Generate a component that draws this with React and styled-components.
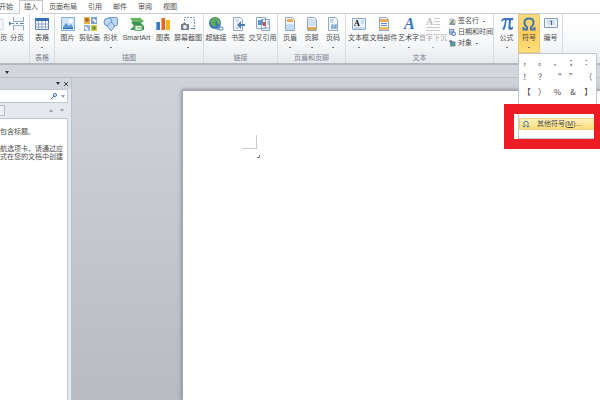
import React from 'react'
import styled, { createGlobalStyle, css } from 'styled-components'

const tabs = ['开始', '插入', '页面布局', '引用', '邮件', '审阅', '视图']

const groups = [
    {
        name: '',
        items: [
            { label: '页', icon: 'blank', w: 5 },
            { label: '分页', icon: 'break', w: 22 }
        ]
    },
    { name: '表格', items: [{ label: '表格', icon: 'table', w: 22, more: true }] },
    {
        name: '插图',
        items: [
            { label: '图片', icon: 'picture', w: 23 },
            { label: '剪贴画', icon: 'clip', w: 21 },
            { label: '形状', icon: 'shapes', w: 21, more: true },
            { label: 'SmartArt', icon: 'smart', w: 31 },
            { label: '图表', icon: 'chart', w: 22 },
            { label: '屏幕截图', icon: 'shot', w: 28, more: true }
        ]
    },
    {
        name: '链接',
        items: [
            { label: '超链接', icon: 'globe', w: 22 },
            { label: '书签', icon: 'bookmark', w: 22 },
            { label: '交叉引用', icon: 'cross', w: 27 }
        ]
    },
    {
        name: '页眉和页脚',
        items: [
            { label: '页眉', icon: 'header', w: 22, more: true },
            { label: '页脚', icon: 'footer', w: 21, more: true },
            { label: '页码', icon: 'number', w: 22, more: true }
        ]
    },
    {
        name: '文本',
        items: [
            { label: '文本框', icon: 'textbox', w: 23, more: true },
            { label: '文档部件', icon: 'parts', w: 27, more: true },
            { label: '艺术字', icon: 'wordart', w: 23, more: true },
            { label: '首字下沉', icon: 'dropcap', w: 26, more: true, off: true }
        ],
        stack: [
            { label: '签名行', icon: 'sign', more: true },
            { label: '日期和时间', icon: 'date' },
            { label: '对象', icon: 'object', more: true }
        ]
    },
    {
        name: '',
        items: [
            { label: '公式', icon: 'pi', w: 23, more: true },
            { label: '符号', icon: 'omega', w: 22, more: true, open: true },
            { label: '编号', icon: 'numbering', w: 21 }
        ]
    }
]

const symbols = ['，', '。', '、', '；', '：', '！', '？', '“', '”', '（', '【', '）', '%', '&', '】']

const GlobalStyle = createGlobalStyle`
    * {
        box-sizing: border-box;
    }
    body {
        margin: 0;
        font-family: 'Liberation Sans', 'Noto Sans CJK SC', sans-serif;
        font-size: 7px;
        line-height: 8px;
        color: #4c4c4c;
    }
    button, input {
        font: inherit;
        color: inherit;
        border: 0;
        padding: 0;
        margin: 0;
        background: none;
    }
`

const Window = styled.div`
    display: flex;
    flex-direction: column;
    height: 100vh;
    overflow: hidden;
    background: linear-gradient(#d0d4d9 70px, #b8bbc0);
`

const TabBar = styled.div`
    display: flex;
    flex: none;
    height: 14px;
    background: white;
    border-bottom: 1px solid #c9ccd0;
`

const Tab = styled.button`
    flex: none;
    height: 14px;
    padding: 0 5px;
    ${props =>
        props.$active &&
        css`
            background: white;
            border: 1px solid #c4c8cd;
            border-bottom: 0;
            padding: 0 4px 1px;
        `}
`

const Tabs = styled.div`
    display: flex;
    gap: 1px;
    margin-left: -6px;
`

const Ribbon = styled.div`
    display: flex;
    flex: none;
    height: 51px;
    background: linear-gradient(white, #fafbfc 50%, #e6e9ed);
    border-bottom: 2px solid #b3b7bc;
`

const Group = styled.section`
    display: flex;
    flex-direction: column;
    flex: none;
    gap: 1px;
    padding: 0 1px;
    border-right: 1px solid #d8dbe0;
`

const Tools = styled.div`
    display: flex;
    height: 39px;
`

const GroupName = styled.div`
    text-align: center;
    color: #7c8189;
`

const ToolSlot = styled.div`
    position: relative;
    width: ${props => props.$w}px;
`

const Tool = styled.button`
    display: flex;
    flex-direction: column;
    align-items: center;
    width: 100%;
    height: 39px;
    padding-top: 2px;
    white-space: nowrap;
    opacity: ${props => (props.$off ? 0.5 : 1)};
    ${props =>
        props.$open &&
        css`
            background: linear-gradient(#fbdc86, #fdcd5c 50%, #ffe07c);
            box-shadow: inset 0 0 0 1px #e9c973;
        `}
`

const ToolLabel = styled.span`
    display: flex;
    justify-content: center;
    width: 0;
    margin-top: 2px;
`

const Arrow = styled.span`
    flex: none;
    width: 2px;
    height: 1px;
    margin-top: 5px;
    background: #777;
`

const Stack = styled.div`
    display: flex;
    flex-direction: column;
    gap: 3px;
    width: 46px;
    padding: 3px 0 0 3px;
`

const SmallTool = styled.button`
    display: flex;
    align-items: center;
    gap: 2px;
    white-space: nowrap;
    ${Arrow} {
        margin: 0 2px;
    }
`

const Menu = styled.div`
    position: absolute;
    z-index: 2;
    top: 39px;
    left: 0;
    width: 79px;
    height: 86px;
    background: white;
    border: 1px solid #c5c8ce;
`

const SymbolGrid = styled.div`
    display: grid;
    grid-template-columns: repeat(5, 1fr);
    grid-auto-rows: 15px;
    height: 64px;
`

const Symbol = styled.button`
    font-family: 'Noto Sans CJK SC', sans-serif;
    font-size: 8px;
`

const MoreSymbols = styled.button`
    display: flex;
    align-items: center;
    gap: 7px;
    width: 100%;
    height: 12px;
    padding-left: 2px;
    white-space: nowrap;
    background: linear-gradient(#fdf0bd, #fbdc78);
    border: 1px solid #efd184;
    border-radius: 1px;
`

const Highlight = styled.div`
    position: absolute;
    top: 50px;
    left: -15px;
    width: 97px;
    height: 45px;
    border: 10px solid #ed1c24;
    border-right-width: 7px;
    pointer-events: none;
`

const QuickAccess = styled.div`
    flex: none;
    height: 13px;
    padding: 6px 5px;
    background: #d3d7db;
    border-bottom: 1px solid #bcc0c5;
`

const Caret = styled.svg`
    display: block;
    width: 4px;
    height: 3px;
`

const Workspace = styled.main`
    display: flex;
    flex: 1;
    min-height: 0;
`

const Navigation = styled.aside`
    display: flex;
    flex-direction: column;
    flex: none;
    width: 72px;
    padding-right: 3px;
    background: #e5e9ee;
    border-right: 1px solid #bcc1c8;
`

const PaneTitle = styled.div`
    display: flex;
    justify-content: flex-end;
    align-items: center;
    gap: 4px;
    height: 11px;
    margin-right: -3px;
    padding-right: 3px;
    background: #cfd6de;
`

const Search = styled.label`
    display: flex;
    align-items: center;
    height: 14px;
    padding-right: 2px;
    gap: 4px;
    background: white;
    border: 1px solid #c1c7cf;
    border-left: 0;
    input {
        flex: 1;
        min-width: 0;
        outline: none;
    }
`

const PaneTabs = styled.div`
    display: flex;
    align-items: center;
    gap: 7px;
    height: 15px;
    padding-right: 4px;
`

const PaneTab = styled.button`
    width: 5px;
    height: 11px;
    margin-right: auto;
    border: 1px solid #b9bec6;
    border-left: 0;
    background: #eef0f3;
`

const Outline = styled.div`
    flex: 1;
    padding-top: 9px;
    background: white;
    border: 1px solid #c1c7cf;
    border-left: 0;
    border-bottom: 0;
    white-space: nowrap;
    p {
        margin: 0 0 9px;
    }
`

const Desk = styled.div`
    flex: 1;
    display: flex;
    padding: 12px 0 0 110px;
`

const Paper = styled.article`
    flex: 1;
    padding: 44px 0 0 59px;
    background: white;
    border: 1px solid #a3a6ab;
    border-right: 0;
    border-bottom: 0;
    box-shadow: 0 0 4px #777a80;
`

const Corner = styled.div`
    width: 15px;
    height: 14px;
    border: solid #c9c9c9;
    border-width: 0 1px 1px 0;
`

const Pilcrow = styled.svg`
    display: block;
    width: 4px;
    height: 4px;
    margin: 6px 0 0 14px;
`

const doc = (
    <path d="M3.500 1.500h7l2 2v11h-9z" fill="#f4f8fd" stroke="#91a9c7" />
)

const drawings = {
    blank: <path d="M4 3.500h3v10H4" fill="#f4f8fd" stroke="#c9d5e4" />,
    break: (
        <g fill="#f4f8fd" stroke="#91a9c7">
            <path d="M4.500 1v4.500h10V1M4.500 14.500v-5h10v5" />
            <path d="M3 7.500h2M7 7.500h2M11 7.500h4" stroke="#5f86b5" />
            <path d="M0 5.500l3 2-3 2z" fill="#4d7fbb" stroke="none" />
        </g>
    ),
    table: (
        <g>
            <path d="M1.500 2.500h13v11h-13z" fill="#fff" stroke="#527bab" />
            <path d="M1 2h14v3H1z" fill="#3970b5" />
            <path d="M1 8h14M1 11h14M4.500 5v9M8 5v9M11.500 5v9" stroke="#8ba7ca" />
        </g>
    ),
    picture: (
        <g>
            <path d="M1.500 1.500h13v13h-13z" fill="#cfe6fa" stroke="#8ab0d8" />
            <path d="M3 11l3-4 3 3 2-2 2 3v1H3z" fill="#5b96d4" />
            <circle cx="11" cy="5" r="2" fill="#fff" />
            <path d="M3 12h10v1H3z" fill="#2d6ba9" />
        </g>
    ),
    clip: (
        <g>
            <path d="M2 1h6v7H2z" fill="#e4b44b" />
            <path d="M9 1h6v7H9z" fill="#79a2cd" />
            <path d="M2 9h6v6H2z" fill="#8fafdb" />
            <path d="M9 9h6v6H9z" fill="#e4c44c" />
            <circle cx="5" cy="4" r="2" fill="#b26b2c" />
            <circle cx="12" cy="12" r="2" fill="#679a3d" />
            <path d="M11 3l3 3M3 11l3 3" stroke="#f3f7fa" strokeWidth="2" />
        </g>
    ),
    shapes: (
        <g fill="#bdd7f3" stroke="#6b97ca">
            <rect x="5.500" y="1.500" width="9" height="8" rx="1" />
            <circle cx="5" cy="6" r="4" />
            <path d="M8 6l4 4-4 5-4-5z" />
        </g>
    ),
    smart: (
        <g>
            <path d="M1 2h9V1l5 4-4 3H5z" fill="#66b65d" />
            <path d="M1 14l4-4-3-4h9l4 4v4z" fill="#3b9451" />
            <path d="M6 9.500h7v5H6z" fill="#eaf6e8" stroke="#5fa866" />
            <path d="M8 12h4" stroke="#5fa866" />
        </g>
    ),
    chart: (
        <g>
            <path d="M1 6h4v8H1z" fill="#387bc2" />
            <path d="M6 2h4v12H6z" fill="#e9661f" />
            <path d="M11 4h4v10h-4z" fill="#f3b51c" />
            <path d="M1 6h1v8H1z" fill="#75a7dc" />
            <path d="M6 2h1v12H6z" fill="#f89c62" />
        </g>
    ),
    shot: (
        <g>
            <path d="M4.500 8V1.500h10v12" fill="#fafbfd" stroke="#8a9bb1" strokeDasharray="2 1" />
            <path d="M1 8h8v6H1zM3 7h3v1H3z" fill="#777f8a" />
            <circle cx="5" cy="11" r="2" fill="#e5edf5" />
            <path d="M11 12.500h4" stroke="#547fae" />
        </g>
    ),
    globe: (
        <g>
            <circle cx="7" cy="7" r="6" fill="#2f74c0" />
            <path d="M4 2l5-1 1 3-3 2 1 3-3 2-3-5z" fill="#62ad4f" />
            <path d="M10 3l3 3-2 3-2-2z" fill="#74b85e" />
            <g fill="none" stroke="#5f88b3">
                <rect x="7" y="10" width="5" height="3" rx="1" />
                <rect x="10" y="11" width="5" height="3" rx="1" />
            </g>
        </g>
    ),
    bookmark: (
        <g>
            {doc}
            <path d="M6 4h3M6 6h2M5 12h4" stroke="#b0bfd1" />
            <path d="M15 8h-4V5L7 9l4 4v-3h4z" fill="#4a7dbc" />
        </g>
    ),
    cross: (
        <g>
            <path d="M1.500 1.500h9v11h-9zM6.500 3.500h8v11h-8z" fill="#f5f8fc" stroke="#8ba7c8" />
            <path d="M3 4h5v5H3z" fill="#5e91c7" />
            <path d="M8 6h3v4H8z" fill="#c95a52" />
            <path d="M12 6h2M12 8h2M8 12h6" stroke="#8ba7c8" />
        </g>
    ),
    header: (
        <g>
            {doc}
            <path d="M5 3h6v3H5z" fill="#e4aa50" />
            <path d="M4 8h8v6H4z" fill="#c5d9ef" />
        </g>
    ),
    footer: (
        <g>
            {doc}
            <path d="M4 3h8v7H4z" fill="#d1e0f1" />
            <path d="M4 11h8v3H4z" fill="#e4aa50" />
        </g>
    ),
    number: (
        <g>
            {doc}
            <path d="M5 4h4M5 6h3" stroke="#9ab4d1" />
            <path d="M6 8h6v5H6z" fill="#dae7f5" />
            <path d="M8 8l-1 5M11 8l-1 5M6 10h6M6 12h6" stroke="#6f98c8" />
        </g>
    ),
    textbox: (
        <g>
            <path d="M1.500 2.500h13v11h-13z" fill="#edf4fc" stroke="#8ba7c8" />
            <text x="3" y="10" fontSize="8" fontFamily="Liberation Serif" fontWeight="bold">
                A
            </text>
            <path d="M10 5h3M10 7h3M3 12h10" stroke="#a2bbd6" />
        </g>
    ),
    parts: (
        <g>
            {doc}
            <path d="M4 3h8v3H4z" fill="#ecaa56" />
            <path d="M5 7.500h6M5 9.500h6" stroke="#658cc1" />
            <path d="M4 11h8v3H4z" fill="#edba70" />
        </g>
    ),
    wordart: (
        <text x="3" y="13" fontSize="16" fontFamily="Liberation Serif" fontStyle="italic" fontWeight="bold" fill="#3673bd">
            A
        </text>
    ),
    dropcap: (
        <g>
            <text x="1" y="9" fontSize="10" fontFamily="Liberation Serif" fontWeight="bold" fill="#777">
                A
            </text>
            <path d="M9 2.500h6M9 5.500h6M9 8.500h6M1 11.500h14M1 14.500h14" stroke="#999" />
        </g>
    ),
    pi: (
        <path
            transform="translate(2 1)"
            d="M0 4Q1 1 4 1h8.500l-.5 2.200h-2L9.500 9q0 1.500 1 1.500t1.300-1l.5.300Q12 13 9.500 13T7.300 10L8 3.200H5.500Q5 10 3.500 12.500 1.500 13.500 1.500 12 3.500 9 4 3.200 2 3 .8 4.500z"
            fill="#3974bb"
        />
    ),
    omega: (
        <path
            d="M2.500 11v2.500h3.500V11Q3.500 9.500 3.500 6.500 3.500 2.500 8 2.500t4.500 4q0 3-2.500 4.500v2.500h3.500V11"
            fill="none"
            stroke="#4777a7"
            strokeWidth="2"
        />
    ),
    numbering: (
        <g>
            <path d="M1.500 2.500h13v9h-13z" fill="#eff5fc" stroke="#7f9cbf" />
            <path d="M4 4h8v5H4z" fill="#d3deec" />
            <path d="M7 5h1.500v4" fill="none" stroke="#46678e" />
        </g>
    ),
    sign: (
        <g>
            <path d="M2 2h9l3 3v9H2z" fill="#cdd9e7" stroke="#8495a9" />
            <path d="M3 11l6-7 3 3-6 6z" fill="#8a8a3a" />
            <path d="M1 14h13" stroke="#425468" strokeWidth="2" />
        </g>
    ),
    date: (
        <g>
            <path d="M1 1h10v11H1z" fill="#dfe9f7" stroke="#4f79b1" strokeWidth="2" />
            <path d="M3 5h6M3 8h6" stroke="#5f82b2" strokeWidth="2" />
            <circle cx="11" cy="11" r="4" fill="#eef4fb" stroke="#3269ad" strokeWidth="2" />
        </g>
    ),
    object: (
        <g>
            <path d="M3 4h11v10H3z" fill="#5791bd" stroke="#476d8d" />
            <path d="M1 1h6v4H1z" fill="#4e6474" />
            <path d="M5 13l4-7 4 7z" fill="#58a75e" />
        </g>
    )
}

const Svg = styled.svg`
    flex: none;
    width: ${props => props.$size}px;
    height: ${props => props.$size}px;
`

const Icon = ({ name, size = 16 }) => (
    <Svg $size={size} viewBox="0 0 16 16" aria-hidden="true">
        {drawings[name]}
    </Svg>
)

const Down = ({ color = '#333' }) => (
    <Caret viewBox="0 0 4 3">
        <path d="M0 0h4L2 3z" fill={color} />
    </Caret>
)

const SymbolMenu = () => (
    <Menu>
        <SymbolGrid>
            {symbols.map(s => (
                <Symbol key={s}>{s}</Symbol>
            ))}
        </SymbolGrid>
        <MoreSymbols>
            <Icon name="omega" size={8} />
            <span>
                其他符号(<u>M</u>)...
            </span>
        </MoreSymbols>
        <Highlight />
    </Menu>
)

const App = () => (
    <>
        <GlobalStyle />
        <Window>
            <TabBar>
                <Tabs>
                    {tabs.map(t => (
                        <Tab key={t} $active={t === '插入'}>
                            {t}
                        </Tab>
                    ))}
                </Tabs>
            </TabBar>
            <Ribbon>
                {groups.map((g, i) => (
                    <Group key={i}>
                        <Tools>
                            {g.items.map(t => (
                                <ToolSlot key={t.icon} $w={t.w}>
                                    <Tool $open={t.open} $off={t.off} disabled={t.off}>
                                        <Icon name={t.icon} />
                                        <ToolLabel>{t.label}</ToolLabel>
                                        {t.more && <Arrow />}
                                    </Tool>
                                    {t.open && <SymbolMenu />}
                                </ToolSlot>
                            ))}
                            {g.stack && (
                                <Stack>
                                    {g.stack.map(t => (
                                        <SmallTool key={t.icon}>
                                            <Icon name={t.icon} size={7} />
                                            {t.label}
                                            {t.more && <Arrow />}
                                        </SmallTool>
                                    ))}
                                </Stack>
                            )}
                        </Tools>
                        <GroupName>{g.name}</GroupName>
                    </Group>
                ))}
            </Ribbon>
            <QuickAccess>
                <Down />
            </QuickAccess>
            <Workspace>
                <Navigation>
                    <PaneTitle>
                        <Down />
                        <svg width="4" height="4" viewBox="0 0 4 4">
                            <path d="M0 0l4 4M4 0L0 4" stroke="#444" />
                        </svg>
                    </PaneTitle>
                    <Search>
                        <input aria-label="搜索文档" />
                        <svg width="6" height="6" viewBox="0 0 6 6">
                            <circle cx="4" cy="2" r="1.500" fill="none" stroke="#3e6ca8" />
                            <path d="M3 3L0 6" stroke="#3e6ca8" />
                        </svg>
                        <Down color="#9aa0a8" />
                    </Search>
                    <PaneTabs>
                        <PaneTab aria-label="浏览结果" />
                        <svg width="4" height="3" viewBox="0 0 4 3">
                            <path d="M0 3h4L2 0z" fill="#9da2a9" />
                        </svg>
                        <Down color="#9da2a9" />
                    </PaneTabs>
                    <Outline>
                        <p>包含标题。</p>
                        <p>
                            航选项卡，请通过应
                            <br />
                            式在您的文档中创建
                        </p>
                    </Outline>
                </Navigation>
                <Desk>
                    <Paper>
                        <Corner />
                        <Pilcrow viewBox="0 0 4 4">
                            <path d="M3.500 0v2.500H1" fill="none" stroke="#777" />
                        </Pilcrow>
                    </Paper>
                </Desk>
            </Workspace>
        </Window>
    </>
)

export default App
